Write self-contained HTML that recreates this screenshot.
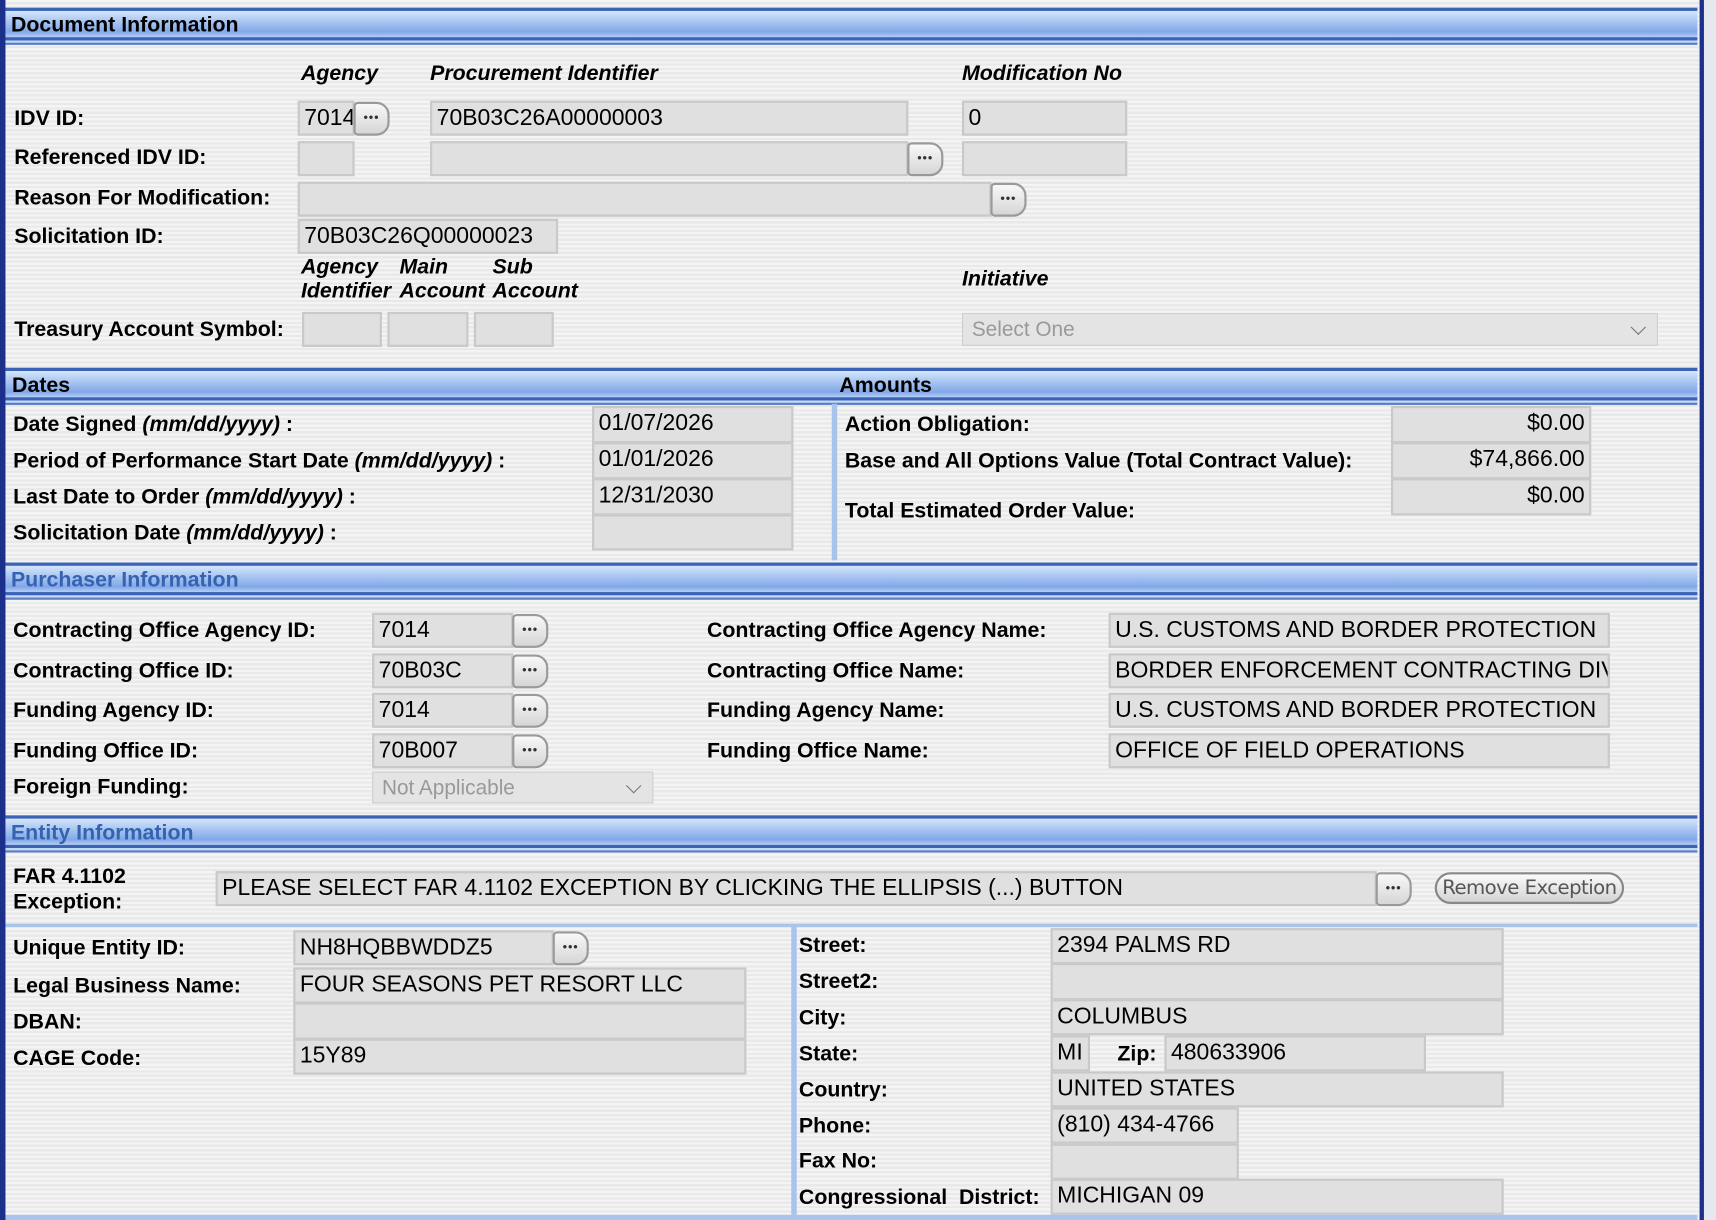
<!DOCTYPE html>
<html><head><meta charset="utf-8"><style>
html,body{margin:0;padding:0;width:1716px;height:1220px;overflow:hidden;background:#f0f0f0}
#w{position:absolute;left:0;top:0;width:1568px;height:1115px;transform:scale(1.09439);transform-origin:0 0;
background:repeating-linear-gradient(#f4f4f4 0 2px,#e9e9e9 2px 4px);font-family:"Liberation Sans",Arial,sans-serif;color:#000}
.a{position:absolute;white-space:nowrap}
.l{position:absolute;font-weight:bold;font-size:19.5px;white-space:nowrap;line-height:21px}
.i{font-style:italic}
.f{position:absolute;background:#e0e0e0;border:2px solid #c9c9c9;box-sizing:border-box;font-size:21px;line-height:28px;padding-left:4px;overflow:hidden;white-space:nowrap}
.r{text-align:right;padding-right:4px}
.h{position:absolute;left:5px;width:1546px;height:30px;border-top:3px solid #3a63b8;border-bottom:3px solid #3a63b8;
background:linear-gradient(#d6e6fb,#aecaf3 35%,#82a8e8 80%,#b4cef4);box-sizing:border-box}
.h span{position:absolute;top:2px;font-weight:bold;font-size:19.5px}
.h::after{content:"";position:absolute;left:0;right:0;bottom:-7px;height:2px;background:#c8dbf6;border-bottom:2px solid #5a7fc8}
.e{position:absolute;z-index:2;width:33px;height:31px;border:2px solid #9a9a9a;border-radius:4px 12px 12px 4px;background:linear-gradient(#f8f8f8,#d6d6d6);box-sizing:border-box;text-align:center;font-size:11px;line-height:26px;font-weight:bold;color:#333;letter-spacing:1px}
.s{position:absolute;background:#e4e4e4;border:1px solid #cfcfcf;box-sizing:border-box;font-size:19px;color:#999;padding-left:8px;line-height:29px}
.s::after{content:"";position:absolute;right:12px;top:7px;width:9px;height:9px;border-right:1.5px solid #777;border-bottom:1.5px solid #777;transform:rotate(45deg)}
</style></head><body><div id="w">
<div class="a" style="left:0;top:0;width:5px;height:1115px;background:#1c2f8a"></div>
<div class="a" style="left:1553px;top:0;width:4px;height:1115px;background:#1c2f8a"></div>
<div class="a" style="left:1557px;top:0;width:11px;height:1115px;background:#e6e8f0"></div>

<div class="h" style="top:7px"><span style="left:5px">Document Information</span></div>
<div class="l i" style="left:275px;top:57px">Agency</div>
<div class="l i" style="left:393px;top:57px">Procurement Identifier</div>
<div class="l i" style="left:879px;top:57px">Modification No</div>
<div class="l" style="left:13px;top:98px">IDV ID:</div>
<div class="f" style="left:272px;top:92px;width:52px;height:32px">7014</div>
<div class="e" style="left:323px;top:93px">•••</div>
<div class="f" style="left:393px;top:92px;width:437px;height:32px">70B03C26A00000003</div>
<div class="f" style="left:879px;top:92px;width:151px;height:32px">0</div>
<div class="l" style="left:13px;top:134px">Referenced IDV ID:</div>
<div class="f" style="left:272px;top:129px;width:52px;height:32px"></div>
<div class="f" style="left:393px;top:129px;width:437px;height:32px"></div>
<div class="e" style="left:829px;top:130px">•••</div>
<div class="f" style="left:879px;top:129px;width:151px;height:32px"></div>
<div class="l" style="left:13px;top:171px">Reason For Modification:</div>
<div class="f" style="left:272px;top:166px;width:634px;height:32px"></div>
<div class="e" style="left:905px;top:167px">•••</div>
<div class="l" style="left:13px;top:206px">Solicitation ID:</div>
<div class="f" style="left:272px;top:200px;width:238px;height:32px">70B03C26Q00000023</div>
<div class="l i" style="left:275px;top:233px;line-height:22px">Agency<br>Identifier</div>
<div class="l i" style="left:365px;top:233px;line-height:22px">Main<br>Account</div>
<div class="l i" style="left:450px;top:233px;line-height:22px">Sub<br>Account</div>
<div class="l i" style="left:879px;top:245px">Initiative</div>
<div class="l" style="left:13px;top:291px">Treasury Account Symbol:</div>
<div class="f" style="left:276px;top:285px;width:73px;height:32px"></div>
<div class="f" style="left:354px;top:285px;width:74px;height:32px"></div>
<div class="f" style="left:433px;top:285px;width:73px;height:32px"></div>
<div class="s" style="left:879px;top:286px;width:636px;height:30px">Select One</div>

<div class="h" style="top:336px"><span style="left:6px">Dates</span><span style="left:762px">Amounts</span></div>
<div class="a" style="left:760px;top:369px;width:5px;height:143px;background:#a8c4ec"></div>
<div class="l" style="left:12px;top:378px">Date Signed <i>(mm/dd/yyyy)</i> :</div>
<div class="l" style="left:12px;top:411px">Period of Performance Start Date <i>(mm/dd/yyyy)</i> :</div>
<div class="l" style="left:12px;top:444px">Last Date to Order <i>(mm/dd/yyyy)</i> :</div>
<div class="l" style="left:12px;top:477px">Solicitation Date <i>(mm/dd/yyyy)</i> :</div>
<div class="f" style="left:541px;top:371px;width:184px;height:34px">01/07/2026</div>
<div class="f" style="left:541px;top:404px;width:184px;height:34px">01/01/2026</div>
<div class="f" style="left:541px;top:437px;width:184px;height:34px">12/31/2030</div>
<div class="f" style="left:541px;top:470px;width:184px;height:33px"></div>
<div class="l" style="left:772px;top:378px">Action Obligation:</div>
<div class="l" style="left:772px;top:411px">Base and All Options Value (Total Contract Value):</div>
<div class="l" style="left:772px;top:457px">Total Estimated Order Value:</div>
<div class="f r" style="left:1271px;top:371px;width:183px;height:34px">$0.00</div>
<div class="f r" style="left:1271px;top:404px;width:183px;height:34px">$74,866.00</div>
<div class="f r" style="left:1271px;top:437px;width:183px;height:34px">$0.00</div>

<div class="h" style="top:514px"><span style="left:5px;color:#3563b0">Purchaser Information</span></div>
<div class="l" style="left:12px;top:566px">Contracting Office Agency ID:</div>
<div class="l" style="left:12px;top:603px">Contracting Office ID:</div>
<div class="l" style="left:12px;top:639px">Funding Agency ID:</div>
<div class="l" style="left:12px;top:676px">Funding Office ID:</div>
<div class="l" style="left:12px;top:709px">Foreign Funding:</div>
<div class="f" style="left:340px;top:560px;width:129px;height:32px">7014</div><div class="e" style="left:468px;top:561px">•••</div>
<div class="f" style="left:340px;top:597px;width:129px;height:32px">70B03C</div><div class="e" style="left:468px;top:598px">•••</div>
<div class="f" style="left:340px;top:633px;width:129px;height:32px">7014</div><div class="e" style="left:468px;top:634px">•••</div>
<div class="f" style="left:340px;top:670px;width:129px;height:32px">70B007</div><div class="e" style="left:468px;top:671px">•••</div>
<div class="s" style="left:340px;top:705px;width:257px;height:29px">Not Applicable</div>
<div class="l" style="left:646px;top:566px">Contracting Office Agency Name:</div>
<div class="l" style="left:646px;top:603px">Contracting Office Name:</div>
<div class="l" style="left:646px;top:639px">Funding Agency Name:</div>
<div class="l" style="left:646px;top:676px">Funding Office Name:</div>
<div class="f" style="left:1013px;top:560px;width:458px;height:32px">U.S. CUSTOMS AND BORDER PROTECTION</div>
<div class="f" style="left:1013px;top:597px;width:458px;height:32px">BORDER ENFORCEMENT CONTRACTING DIVISION</div>
<div class="f" style="left:1013px;top:633px;width:458px;height:32px">U.S. CUSTOMS AND BORDER PROTECTION</div>
<div class="f" style="left:1013px;top:670px;width:458px;height:32px">OFFICE OF FIELD OPERATIONS</div>

<div class="h" style="top:745px"><span style="left:5px;color:#3563b0">Entity Information</span></div>
<div class="l" style="left:12px;top:790px;line-height:23px">FAR 4.1102<br>Exception:</div>
<div class="f" style="left:197px;top:796px;width:1061px;height:32px">PLEASE SELECT FAR 4.1102 EXCEPTION BY CLICKING THE ELLIPSIS (...) BUTTON</div>
<div class="e" style="left:1257px;top:797px">•••</div>
<div class="a" style="left:1311px;top:797px;width:173px;height:29px;border:2px solid #888;border-radius:15px;box-sizing:border-box;background:linear-gradient(#fafafa,#d4d4d4);font-size:18px;color:#555;text-align:center;line-height:25px;font-family:'DejaVu Sans',sans-serif;letter-spacing:-0.5px">Remove Exception</div>
<div class="a" style="left:5px;top:844px;width:1546px;height:3px;background:#a8c4ec"></div>
<div class="a" style="left:723px;top:847px;width:5px;height:263px;background:#a8c4ec"></div>
<div class="l" style="left:12px;top:856px">Unique Entity ID:</div>
<div class="l" style="left:12px;top:891px">Legal Business Name:</div>
<div class="l" style="left:12px;top:924px">DBAN:</div>
<div class="l" style="left:12px;top:957px">CAGE Code:</div>
<div class="f" style="left:268px;top:850px;width:238px;height:32px">NH8HQBBWDDZ5</div><div class="e" style="left:505px;top:851px">•••</div>
<div class="f" style="left:268px;top:884px;width:414px;height:33px">FOUR SEASONS PET RESORT LLC</div>
<div class="f" style="left:268px;top:916px;width:414px;height:34px"></div>
<div class="f" style="left:268px;top:949px;width:414px;height:33px">15Y89</div>
<div class="l" style="left:730px;top:854px">Street:</div>
<div class="l" style="left:730px;top:887px">Street2:</div>
<div class="l" style="left:730px;top:920px">City:</div>
<div class="l" style="left:730px;top:953px">State:</div>
<div class="l" style="left:730px;top:986px">Country:</div>
<div class="l" style="left:730px;top:1019px">Phone:</div>
<div class="l" style="left:730px;top:1051px">Fax No:</div>
<div class="l" style="left:730px;top:1084px">Congressional&nbsp; District:</div>
<div class="f" style="left:960px;top:848px;width:414px;height:33px">2394 PALMS RD</div>
<div class="f" style="left:960px;top:880px;width:414px;height:34px"></div>
<div class="f" style="left:960px;top:913px;width:414px;height:33px">COLUMBUS</div>
<div class="f" style="left:960px;top:946px;width:36px;height:33px">MI</div>
<div class="l" style="left:1021px;top:953px">Zip:</div>
<div class="f" style="left:1064px;top:946px;width:239px;height:33px">480633906</div>
<div class="f" style="left:960px;top:979px;width:414px;height:33px">UNITED STATES</div>
<div class="f" style="left:960px;top:1012px;width:172px;height:33px">(810) 434-4766</div>
<div class="f" style="left:960px;top:1045px;width:172px;height:33px"></div>
<div class="f" style="left:960px;top:1077px;width:414px;height:33px">MICHIGAN 09</div>
<div class="a" style="left:5px;top:1110px;width:1546px;height:5px;background:#a8c4ec"></div>
</div></body></html>
